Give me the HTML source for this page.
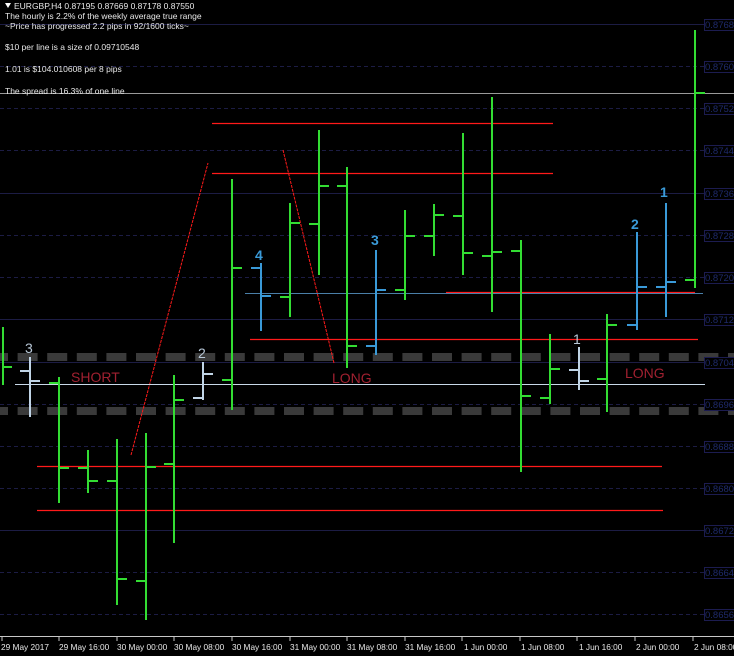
<!DOCTYPE html>
<html><head><meta charset="utf-8"><style>
html,body{margin:0;padding:0;background:#000;}
body{width:734px;height:656px;overflow:hidden;position:relative;font-family:"Liberation Sans",sans-serif;}
svg{position:absolute;left:0;top:0;}
</style></head><body>
<svg width="734" height="656" viewBox="0 0 734 656" xmlns="http://www.w3.org/2000/svg">
<rect width="734" height="656" fill="#000"/>
<g stroke="#1c1c44" stroke-width="1">
<line x1="0" y1="24.5" x2="705" y2="24.5"/>
<line x1="0" y1="66.5" x2="705" y2="66.5" stroke-dasharray="4,3"/>
<line x1="0" y1="108.5" x2="705" y2="108.5" stroke-dasharray="4,3"/>
<line x1="0" y1="150.5" x2="705" y2="150.5" stroke-dasharray="4,3"/>
<line x1="0" y1="193.5" x2="705" y2="193.5"/>
<line x1="0" y1="235.5" x2="705" y2="235.5" stroke-dasharray="4,3"/>
<line x1="0" y1="277.5" x2="705" y2="277.5" stroke-dasharray="4,3"/>
<line x1="0" y1="319.5" x2="705" y2="319.5"/>
<line x1="0" y1="362.5" x2="705" y2="362.5"/>
<line x1="0" y1="404.5" x2="705" y2="404.5" stroke-dasharray="4,3"/>
<line x1="0" y1="446.5" x2="705" y2="446.5" stroke-dasharray="4,3"/>
<line x1="0" y1="488.5" x2="705" y2="488.5" stroke-dasharray="4,3"/>
<line x1="0" y1="530.5" x2="705" y2="530.5"/>
<line x1="0" y1="572.5" x2="705" y2="572.5" stroke-dasharray="4,3"/>
<line x1="0" y1="614.5" x2="705" y2="614.5" stroke-dasharray="4,3"/>
</g>
<line x1="-12" y1="357" x2="734" y2="357" stroke="#3a3a3a" stroke-width="8" stroke-dasharray="20,9.6"/>
<line x1="-12" y1="411" x2="734" y2="411" stroke="#3a3a3a" stroke-width="8" stroke-dasharray="20,9.6"/>
<line x1="0" y1="93.5" x2="734" y2="93.5" stroke="#9a9a9a"/>
<path d="M212 123.5H553M212 173.5H553M446 292.5H695M250 339.5H698M37 466.5H662M37 510.5H663" stroke="#ff1a1a" stroke-width="1.2" fill="none"/>
<line x1="131" y1="455" x2="208" y2="163" stroke="#ff1a1a" stroke-dasharray="3,1"/>
<line x1="283" y1="150" x2="334" y2="363" stroke="#ff1a1a" stroke-dasharray="3,1"/>
<line x1="245" y1="293.5" x2="703" y2="293.5" stroke="#4a7fa8"/>
<line x1="15" y1="384.5" x2="705" y2="384.5" stroke="#c8d8e8"/>
<g stroke-width="2" fill="none">
<path stroke="#33dd33" d="M3 327V385M3 367H12"/>
<path stroke="#c0d4e6" d="M30 357V417M20 371H30M30 381H40"/>
<path stroke="#33dd33" d="M59 377V503M49 383H59M59 468H69"/>
<path stroke="#33dd33" d="M88 450V493M78 468H88M88 481H98"/>
<path stroke="#33dd33" d="M117 439V605M107 481H117M117 579H127"/>
<path stroke="#33dd33" d="M146 433V620M136 581H146M146 467H156"/>
<path stroke="#33dd33" d="M174 375V543M164 464H174M174 400H184"/>
<path stroke="#c0d4e6" d="M203 362V400M193 398H203M203 374H213"/>
<path stroke="#33dd33" d="M232 179V410M222 380H232M232 268H242"/>
<path stroke="#3a9ad8" d="M261 263V331M251 268H261M261 296H271"/>
<path stroke="#33dd33" d="M290 203V317M280 297H290M290 223H300"/>
<path stroke="#33dd33" d="M319 130V275M309 224H319M319 186H329"/>
<path stroke="#33dd33" d="M347 167V368M337 186H347M347 346H357"/>
<path stroke="#3a9ad8" d="M376 250V355M366 346H376M376 290H386"/>
<path stroke="#33dd33" d="M405 210V300M395 290H405M405 236H415"/>
<path stroke="#33dd33" d="M434 204V256M424 236H434M434 215H444"/>
<path stroke="#33dd33" d="M463 133V275M453 216H463M463 253H473"/>
<path stroke="#33dd33" d="M492 97V312M482 256H492M492 252H502"/>
<path stroke="#33dd33" d="M521 240V472M511 251H521M521 396H531"/>
<path stroke="#33dd33" d="M550 334V404M540 398H550M550 369H560"/>
<path stroke="#c0d4e6" d="M579 347V390M569 370H579M579 381H589"/>
<path stroke="#33dd33" d="M607 314V412M597 379H607M607 325H617"/>
<path stroke="#3a9ad8" d="M637 232V330M627 325H637M637 287H647"/>
<path stroke="#3a9ad8" d="M666 203V317M656 287H666M666 282H676"/>
<path stroke="#33dd33" d="M695 30V288M685 280H695M695 93H705"/>
</g>
<g font-family="Liberation Sans, sans-serif" font-size="14">
<text x="71" y="382" fill="#a02030">SHORT</text>
<text x="332" y="383" fill="#a02030">LONG</text>
<text x="625" y="378" fill="#a02030">LONG</text>
<text x="25" y="353" fill="#b8c8d8">3</text>
<text x="198" y="358" fill="#b8c8d8">2</text>
<text x="573" y="344" fill="#b8c8d8">1</text>
<g fill="#3a9ad8" font-weight="bold">
<text x="255" y="260">4</text>
<text x="371" y="245">3</text>
<text x="631" y="229">2</text>
<text x="660" y="197">1</text>
</g>
</g>
<g fill="#e8e8e8" font-size="8.5" font-family="Liberation Sans, sans-serif">
<path d="M5 3L11 3L8 8Z" fill="#fff"/>
<text x="14" y="9">EURGBP,H4  0.87195 0.87669 0.87178 0.87550</text>
<text x="5" y="19">The hourly is 2.2% of the weekly average true range</text>
<text x="5" y="29">~Price has progressed  2.2  pips in 92/1600 ticks~</text>
<text x="5" y="50">$10 per line is a size of 0.09710548</text>
<text x="5" y="72">1.01 is $104.010608 per 8 pips</text>
<text x="5" y="94">The spread is 16.3% of one line</text>
</g>
<g font-size="9.5" fill="#1e2a6a" font-family="Liberation Sans, sans-serif">
<g stroke="#1c1c50" fill="#000">
<rect x="704.5" y="19.5" width="32" height="11"/><rect x="704.5" y="61.5" width="32" height="11"/>
<rect x="704.5" y="103.5" width="32" height="11"/><rect x="704.5" y="145.5" width="32" height="11"/>
<rect x="704.5" y="188.5" width="32" height="11"/><rect x="704.5" y="230.5" width="32" height="11"/>
<rect x="704.5" y="272.5" width="32" height="11"/><rect x="704.5" y="314.5" width="32" height="11"/>
<rect x="704.5" y="357.5" width="32" height="11"/><rect x="704.5" y="399.5" width="32" height="11"/>
<rect x="704.5" y="441.5" width="32" height="11"/><rect x="704.5" y="483.5" width="32" height="11"/>
<rect x="704.5" y="525.5" width="32" height="11"/><rect x="704.5" y="567.5" width="32" height="11"/>
<rect x="704.5" y="609.5" width="32" height="11"/>
</g>
<text x="705" y="28">0.8768</text><text x="705" y="70">0.8760</text><text x="705" y="112">0.8752</text>
<text x="705" y="154">0.8744</text><text x="705" y="197">0.8736</text><text x="705" y="239">0.8728</text>
<text x="705" y="281">0.8720</text><text x="705" y="323">0.8712</text><text x="705" y="366">0.8704</text>
<text x="705" y="408">0.8696</text><text x="705" y="450">0.8688</text><text x="705" y="492">0.8680</text>
<text x="705" y="534">0.8672</text><text x="705" y="576">0.8664</text><text x="705" y="618">0.8656</text>
</g>
<line x1="0" y1="636.5" x2="734" y2="636.5" stroke="#c8c8c8"/>
<g stroke="#c8c8c8"><path d="M2 636V641M59 636V641M117 636V641M174 636V641M232 636V641M290 636V641M347 636V641M405 636V641M462 636V641M520 636V641M577 636V641M635 636V641M693 636V641"/></g>
<g fill="#e8e8e8" font-size="8.3" font-family="Liberation Sans, sans-serif">
<text x="1" y="650">29 May 2017</text><text x="59" y="650">29 May 16:00</text>
<text x="117" y="650">30 May 00:00</text><text x="174" y="650">30 May 08:00</text>
<text x="232" y="650">30 May 16:00</text><text x="290" y="650">31 May 00:00</text>
<text x="347" y="650">31 May 08:00</text><text x="405" y="650">31 May 16:00</text>
<text x="464" y="650">1 Jun 00:00</text><text x="521" y="650">1 Jun 08:00</text>
<text x="579" y="650">1 Jun 16:00</text><text x="636" y="650">2 Jun 00:00</text>
<text x="694" y="650">2 Jun 08:00</text>
</g>
</svg>
</body></html>
